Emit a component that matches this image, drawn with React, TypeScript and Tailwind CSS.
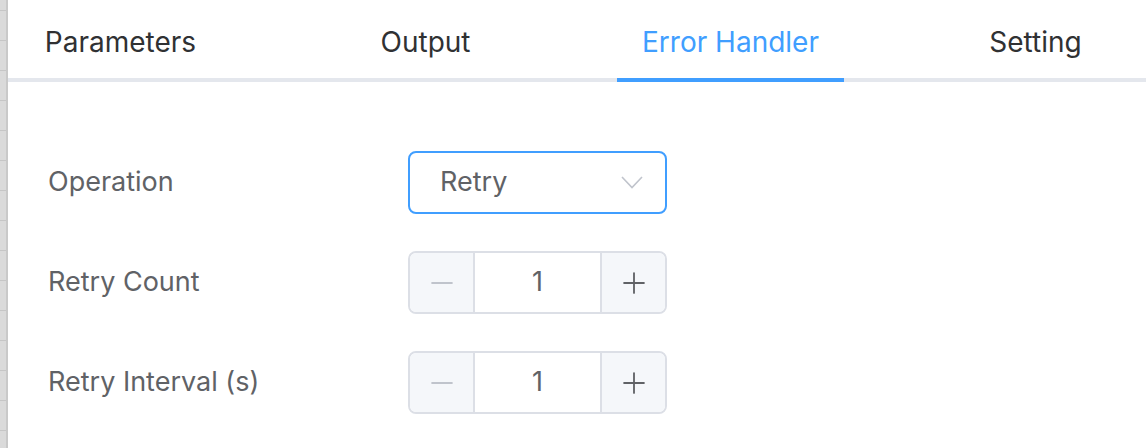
import { Minus, Plus } from 'lucide-react'

const TABS = ['Parameters', 'Output', 'Error Handler', 'Setting']
const ACTIVE = 'Error Handler'

function RulerStrip() {
  const cells = Array.from({ length: 15 })
  return (
    <div className="w-[8px] shrink-0 flex flex-col bg-[#dadada] border-r-2 border-[#c9c9c9]">
      <div className="h-[11px] shrink-0 border-b border-[#c6c6c6]" />
      {cells.map((_, i) => (
        <div key={i} className="h-[30px] shrink-0 border-b border-[#c6c6c6]" />
      ))}
    </div>
  )
}

function NumberInput({ value }: { value: number }) {
  return (
    <div className="flex w-[259px] h-[63px] border-2 border-[#dcdfe6] rounded-[8px] overflow-hidden bg-white">
      <div className="w-[65px] flex items-center justify-center bg-[#f5f7fa] border-r-2 border-[#dcdfe6] text-[#c0c4cc]">
        <Minus size={34} strokeWidth={1.3} />
      </div>
      <div className="flex-1 flex items-center justify-center text-[27px] text-[#606266]">{value}</div>
      <div className="w-[65px] flex items-center justify-center bg-[#f5f7fa] border-l-2 border-[#dcdfe6] text-[#606266]">
        <Plus size={34} strokeWidth={1.3} />
      </div>
    </div>
  )
}

function Row({ label, children }: { label: string; children: React.ReactNode }) {
  return (
    <div className="flex items-center h-[63px]">
      <div className="w-[360px] shrink-0 text-[27px] text-[#606266]">{label}</div>
      {children}
    </div>
  )
}

export default function App() {
  return (
    <div
      className="flex w-[1146px] h-[448px] bg-white overflow-hidden"
      style={{ fontFamily: 'Inter, "Noto Sans", sans-serif' }}
    >
      <RulerStrip />
      <div className="flex-1 flex flex-col min-w-0">
        <div className="h-[82px] shrink-0 overflow-hidden">
          <div className="flex w-[1220px] h-[82px] -ml-[40px]">
            {TABS.map((t) => {
              const active = t === ACTIVE
              return (
                <div key={t} className="flex-1 flex justify-center border-b-4 border-[#e4e7ed]">
                  <div
                    className={
                      'relative -mb-[4px] px-[25px] pt-[6px] flex items-center text-[28px] border-b-4 ' +
                      (active ? 'text-[#409eff] border-[#409eff]' : 'text-[#303133] border-transparent')
                    }
                  >
                    {t}
                  </div>
                </div>
              )
            })}
          </div>
        </div>

        <div className="flex flex-col gap-[37px] pl-[40px] pt-[69px]">
          <Row label="Operation">
            <div className="flex items-center justify-between w-[259px] h-[63px] border-2 border-[#409eff] rounded-[8px] pl-[30px] pr-[22px] text-[27px] text-[#606266]">
              <span>Retry</span>
              <svg width="22" height="13" viewBox="0 0 22 13" fill="none" stroke="#c0c4cc" strokeWidth="1.6">
                <polyline points="1,1 11,11.5 21,1" />
              </svg>
            </div>
          </Row>
          <Row label="Retry Count">
            <NumberInput value={1} />
          </Row>
          <Row label="Retry Interval (s)">
            <NumberInput value={1} />
          </Row>
        </div>
      </div>
    </div>
  )
}
